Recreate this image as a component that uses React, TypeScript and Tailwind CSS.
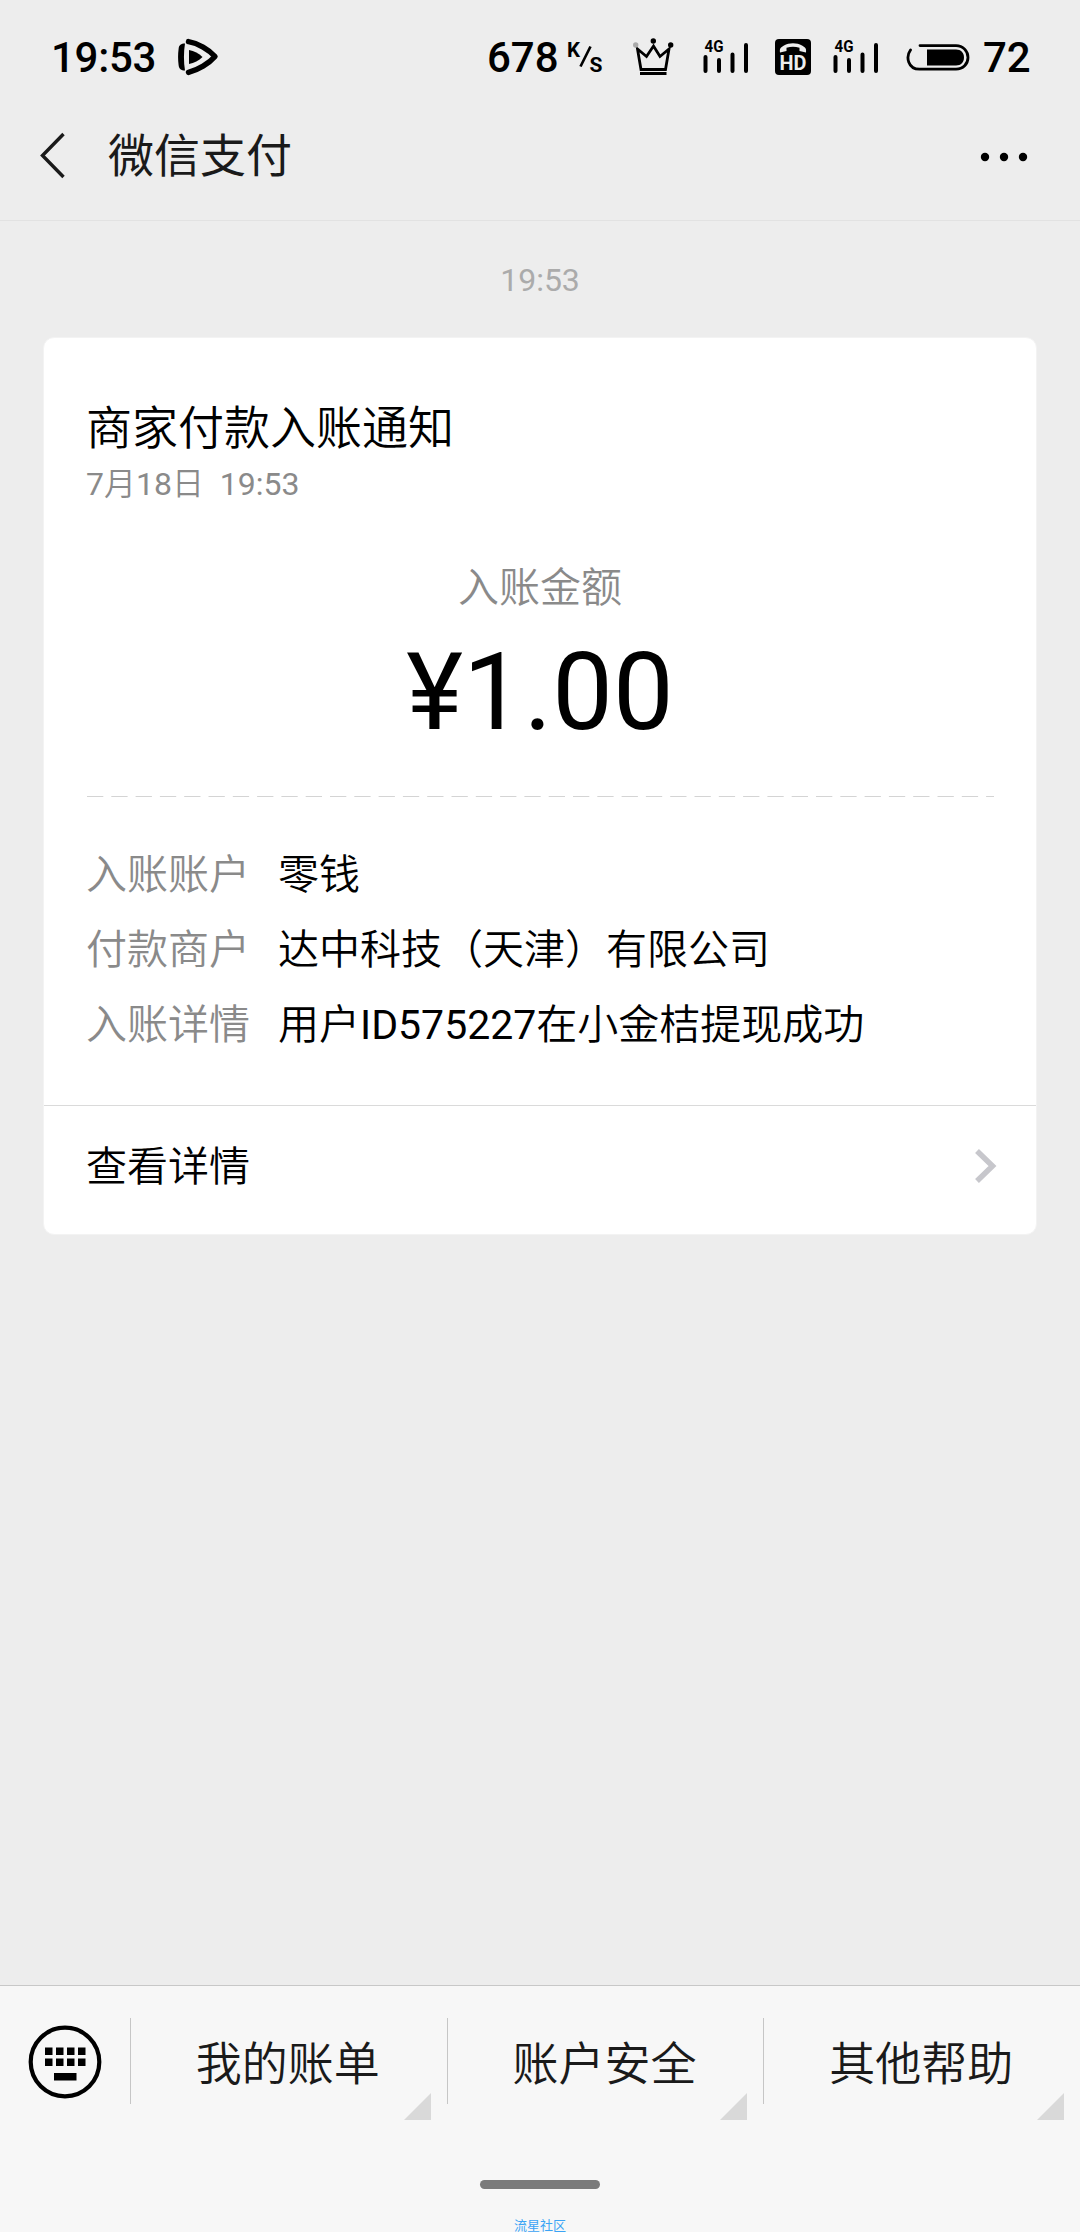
import React from "react";

const details = [
  { label: "入账账户", value: "零钱" },
  { label: "付款商户", value: "达中科技（天津）有限公司" },
  {
    label: "入账详情",
    value: (
      <>
        用户<span className="font-normal">ID575227</span>在小金桔提现成功
      </>
    ),
  },
];

const menus = ["我的账单", "账户安全", "其他帮助"];

const PlayIcon = () => (
  <svg width="41" height="38" viewBox="0 0 41 38" fill="none">
    <path
      d="M10.500 3.600C20 5.200 31 11.500 37 18.500C31 25.500 20 31.800 10.500 34.400"
      stroke="#000"
      strokeWidth="5.400"
      strokeLinecap="round"
      strokeLinejoin="round"
    />
    <path d="M7 5.600C3 5.600 1 7 .6 11C-.1 16 -.1 22 .6 27C1 31 3 32.400 7 32.600C5.600 24 5.600 14 7 5.600Z" fill="#000" />
    <path d="M11 12C16 13 21 15.500 24.500 19C21 22.500 16 25 11 26Z" fill="#000" />
  </svg>
);

const CrownIcon = () => (
  <svg width="41" height="38" viewBox="0 0 41 38" fill="none">
    <path d="M4.500 11L8 31.500H32.500L36 11L27 18.500L20.500 8L13.500 18.500L4.500 11Z" stroke="#000" strokeWidth="2.800" />
    <path d="M7 35.500H33.500" stroke="#000" strokeWidth="3" />
    <circle cx="2.700" cy="7" r="2.700" fill="#aaa" />
    <circle cx="20.300" cy="3" r="2.700" fill="#000" />
    <circle cx="37.700" cy="7" r="2.700" fill="#000" />
  </svg>
);

const SignalIcon = () => (
  <svg width="46" height="44" viewBox="0 -4 46 44">
    <text x="1.500" y="13" fontFamily="Roboto" fontSize="16.500" fontWeight="700" textLength="19" lengthAdjust="spacingAndGlyphs">
      4G
    </text>
    <g stroke="#000" strokeWidth="4" strokeLinecap="round">
      <path d="M2.500 18V32M16 21V32M29.500 15.500V32M43 6V32" />
    </g>
  </svg>
);

const HdIcon = () => (
  <svg width="36" height="36" viewBox="0 0 36 36">
    <rect width="36" height="36" rx="4" fill="#000" />
    <path
      d="M5 13.500C4.500 9.500 5.500 8.500 9 6.500C14 3.500 22 3.500 27 6.500C30.500 8.500 31.500 9.500 31 13.500L24.500 12V8.800C20 7.500 16 7.500 11.500 8.800V12Z"
      fill="#ededed"
    />
    <text x="4.500" y="31" fontFamily="Roboto" fontSize="20.500" fontWeight="700" fill="#ededed" textLength="27" lengthAdjust="spacingAndGlyphs">
      HD
    </text>
  </svg>
);

const BatteryIcon = () => (
  <svg width="64" height="27" viewBox="0 0 64 27" fill="none">
    <path
      d="M4.500 6C-.5 13 2 25.200 13.500 25.200H50C57 25.200 62 20 62 13.500C62 7 57 1.600 50 1.600H14"
      stroke="#000"
      strokeWidth="2.800"
      strokeLinecap="round"
    />
    <path d="M21 5.500H50C55 5.500 58 9 58 13.500C58 18 55 21.500 50 21.500H21Z" fill="#000" />
  </svg>
);

const KeyboardIcon = () => (
  <svg width="74" height="74" viewBox="0 0 74 74">
    <circle cx="37" cy="37" r="34.300" fill="none" stroke="#000" strokeWidth="4.200" />
    {[17, 28, 39, 50].map((x) => (
      <g key={x}>
        <rect x={x} y="22.500" width="7.500" height="7.500" />
        <rect x={x} y="33.500" width="7.500" height="7.500" />
      </g>
    ))}
    <rect x="26" y="48" width="22.500" height="7.500" />
  </svg>
);

const StatusBar = () => {
  return (
    <div className="flex h-[114px] items-center pl-[51px] text-[42px] font-medium text-black">
      <span className="w-[127px] tracking-[-0.3px]">19:53</span>
      <PlayIcon />
      <span className="ml-[268px] w-[80px]">678</span>
      <svg width="37" height="40" viewBox="0 0 37 40" className="mr-[29px]">
        <g fontFamily="Roboto" fontWeight="700">
          <text x="0" y="19.500" fontSize="21" textLength="13" lengthAdjust="spacingAndGlyphs">
            K
          </text>
          <text x="22.500" y="34.500" fontSize="21">S</text>
        </g>
        <path d="M13.500 29.500L23.500 9.500" stroke="#000" strokeWidth="2.600" />
      </svg>
      <CrownIcon />
      <span className="ml-[29px]">
        <SignalIcon />
      </span>
      <span className="ml-[26px]">
        <HdIcon />
      </span>
      <span className="ml-[22px]">
        <SignalIcon />
      </span>
      <span className="ml-[27px]">
        <BatteryIcon />
      </span>
      <span className="ml-[13px]">72</span>
    </div>
  );
};

const Header = () => {
  return (
    <div className="flex h-[107px] items-start border-b border-[#e2e2e2] pl-10 pr-[52px] text-[#1a1a1a]">
      <svg width="26" height="48" viewBox="0 0 26 48" fill="none" className="mt-[17px]">
        <path d="M23.500 3L2.500 24.500L23.500 46" stroke="#1a1a1a" strokeWidth="3.400" />
      </svg>
      <h1 className="ml-[42px] mt-[11px] text-[46px] leading-[62px]">微信支付</h1>
      <svg width="48" height="10" viewBox="0 0 48 10" className="ml-auto mt-[38px]">
        <circle cx="5" cy="5" r="4.200" />
        <circle cx="24" cy="5" r="4.200" />
        <circle cx="43" cy="5" r="4.200" />
      </svg>
    </div>
  );
};

const PaymentCard = () => {
  return (
    <div className="mx-[43px] mt-[36px] h-[898px] rounded-[11px] border border-[#f3f3f3] bg-white text-[41px] text-black">
      <div className="px-[42px] pt-[60px]">
        <h2 className="text-[46px] font-[350] leading-[60px]">商家付款入账通知</h2>
        <p className="whitespace-pre text-[32px] leading-[52px] text-[#8a8a8a]">
          7<span className="font-[350]">月</span>18<span className="font-[350]">日</span>
          {"  19:53"}
        </p>
        <p className="mt-[51px] text-center font-[350] leading-[54px] text-[#8a8a8a]">入账金额</p>
        <p className="mt-[12px] text-center text-[108px] leading-[130px]">¥1.00</p>
        <svg width="907" height="1" className="ml-px mt-[39px] block">
          <path d="M0 .5H907" stroke="#d4d4d4" strokeWidth="1" strokeDasharray="16.300 8" />
        </svg>
        <div className="mt-[41px]">
          {details.map((item) => (
            <div key={item.label} className="flex h-[75px] items-center font-[350]">
              <span className="w-[192px] text-[#8a8a8a]">{item.label}</span>
              <span>{item.value}</span>
            </div>
          ))}
        </div>
      </div>
      <div className="mt-[42px] flex h-[125px] items-center justify-between border-t border-[#dadada] pl-[42px] pr-[38px]">
        <span className="font-[350]">查看详情</span>
        <svg width="24" height="38" viewBox="0 0 24 38" fill="none" className="-mt-1">
          <path d="M3 4L18.500 19L3 34" stroke="#c7c7cc" strokeWidth="5.500" />
        </svg>
      </div>
    </div>
  );
};

const BottomBar = () => {
  return (
    <div className="mt-auto h-[247px] border-t border-[#c8c8c8] bg-[#f7f7f7]">
      <div className="flex h-[135px] pt-8">
        <div className="w-[130px] pl-[28px] pt-[6.500px]">
          <KeyboardIcon />
        </div>
        {menus.map((menu) => (
          <div key={menu} className="relative h-[86px] w-[316.670px] border-l border-[#c6c6c6] pr-[2px] text-center text-[46px] font-[350] leading-[92px] text-[#1a1a1a]">
            {menu}
            <svg width="27" height="27" className="absolute -bottom-4 right-4">
              <path d="M27 0V27H0Z" fill="#d9d9d9" />
            </svg>
          </div>
        ))}
      </div>
      <div className="mx-auto mt-[59px] h-[9px] w-[120px] rounded-full bg-[#7b7b7b]" />
      <p className="mt-[30px] text-center text-[13px] leading-[13px] text-[#3ba4f5]">流星社区</p>
    </div>
  );
};

const App = () => {
  return (
    <div className="flex h-[2232px] w-[1080px] flex-col overflow-hidden bg-[#ededed] font-[Roboto,'Noto_Sans_CJK_SC',sans-serif]">
      <StatusBar />
      <Header />
      <p className="mt-[38px] text-center text-[32px] leading-[42px] text-[#ababab]">19:53</p>
      <PaymentCard />
      <BottomBar />
    </div>
  );
};

export default App;
